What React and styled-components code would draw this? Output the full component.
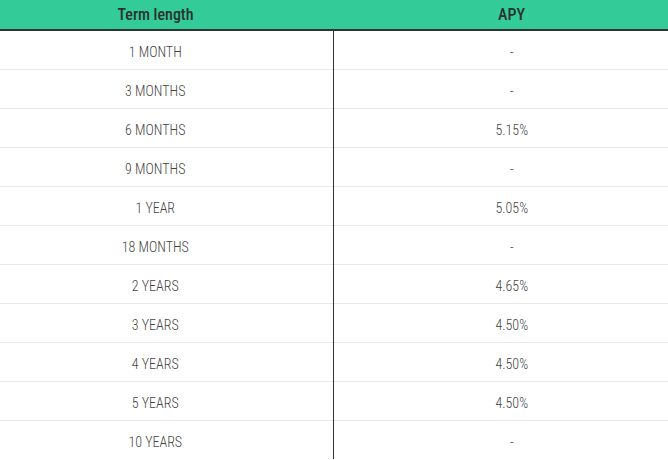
import React from "react";
import styled, { createGlobalStyle } from "styled-components";

const Global = createGlobalStyle`
  html, body { margin: 0; padding: 0; background: #fff; }
  body { font-family: "Roboto Condensed", Roboto, "Liberation Sans", sans-serif; }
`;

const Table = styled.table`
  width: 668px;
  border-collapse: collapse;
  table-layout: fixed;
`;

const HeadCell = styled.th`
  box-sizing: border-box;
  height: 30px;
  padding: ${(p) => (p.$first ? "0 22px 0 0" : "0 0 0 22px")};
  background: #33cc99;
  color: #2b3230;
  font-weight: 500;
  font-size: 16px;
  line-height: 27px;
  text-align: center;
  border-bottom: 2px solid #2f3333;
  width: ${(p) => (p.$first ? "333px" : "auto")};
`;

const Row = styled.tr`
  border-bottom: 1px solid #e9e9e9;
  &:last-child { border-bottom: none; }
`;

const Cell = styled.td`
  height: 35px;
  padding: ${(p) => (p.$first ? "3px 22px 0 0" : "3px 0 0 22px")};
  text-align: center;
  font-size: 14px;
  font-weight: 300;
  color: #444;
  border-right: ${(p) => (p.$first ? "1px solid #333" : "none")};
`;

const rows = [
  ["1 MONTH", "-"],
  ["3 MONTHS", "-"],
  ["6 MONTHS", "5.15%"],
  ["9 MONTHS", "-"],
  ["1 YEAR", "5.05%"],
  ["18 MONTHS", "-"],
  ["2 YEARS", "4.65%"],
  ["3 YEARS", "4.50%"],
  ["4 YEARS", "4.50%"],
  ["5 YEARS", "4.50%"],
  ["10 YEARS", "-"],
];

export default function App() {
  return (
    <>
      <Global />
      <Table>
        <thead>
          <tr>
            <HeadCell $first>Term length</HeadCell>
            <HeadCell>APY</HeadCell>
          </tr>
        </thead>
        <tbody>
          {rows.map(([t, a]) => (
            <Row key={t}>
              <Cell $first>{t}</Cell>
              <Cell>{a}</Cell>
            </Row>
          ))}
        </tbody>
      </Table>
    </>
  );
}
